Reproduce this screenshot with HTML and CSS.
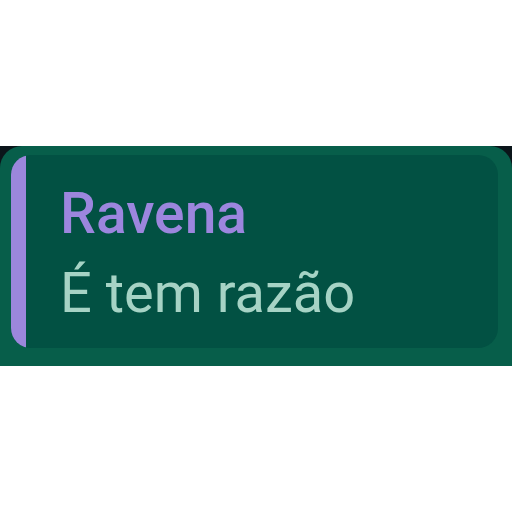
FILE: index.html
```html
<!DOCTYPE html>
<html>
<head>
<meta charset="utf-8">
<link rel="stylesheet" href="styles.css">
</head>
<body>
<div class="strip">
  <div class="outer">
    <div class="quote">
      <div class="bar"></div>
      <div class="content">
        <div class="name">Ravena</div>
        <div class="msg">É tem razão</div>
      </div>
    </div>
  </div>
</div>
</body>
</html>
```
FILE: styles.css
```css
html, body {
  margin: 0;
  padding: 0;
  background: #ffffff;
  width: 512px;
  height: 512px;
  overflow: hidden;
}
.strip {
  margin-top: 146px;
  background: #0b151a;
}
.outer {
  background: #075e4a;
  border-radius: 22px 22px 0 0;
  height: 220px;
  box-sizing: border-box;
  padding: 9px 14px 0 11px;
}
.quote {
  display: flex;
  background: #025143;
  border-radius: 20px;
  overflow: hidden;
  height: 193px;
}
.bar {
  width: 15px;
  background: #9b87dc;
  flex: none;
}
.content {
  padding: 27px 0 0 34px;
  font-family: Roboto, "Noto Sans", sans-serif;
}
.name {
  font-size: 57px;
  line-height: 64px;
  font-weight: 500;
  color: #9c86de;
}
.msg {
  margin-top: 7px;
  font-size: 56px;
  line-height: 80px;
  color: #a6d3c5;
}
```
